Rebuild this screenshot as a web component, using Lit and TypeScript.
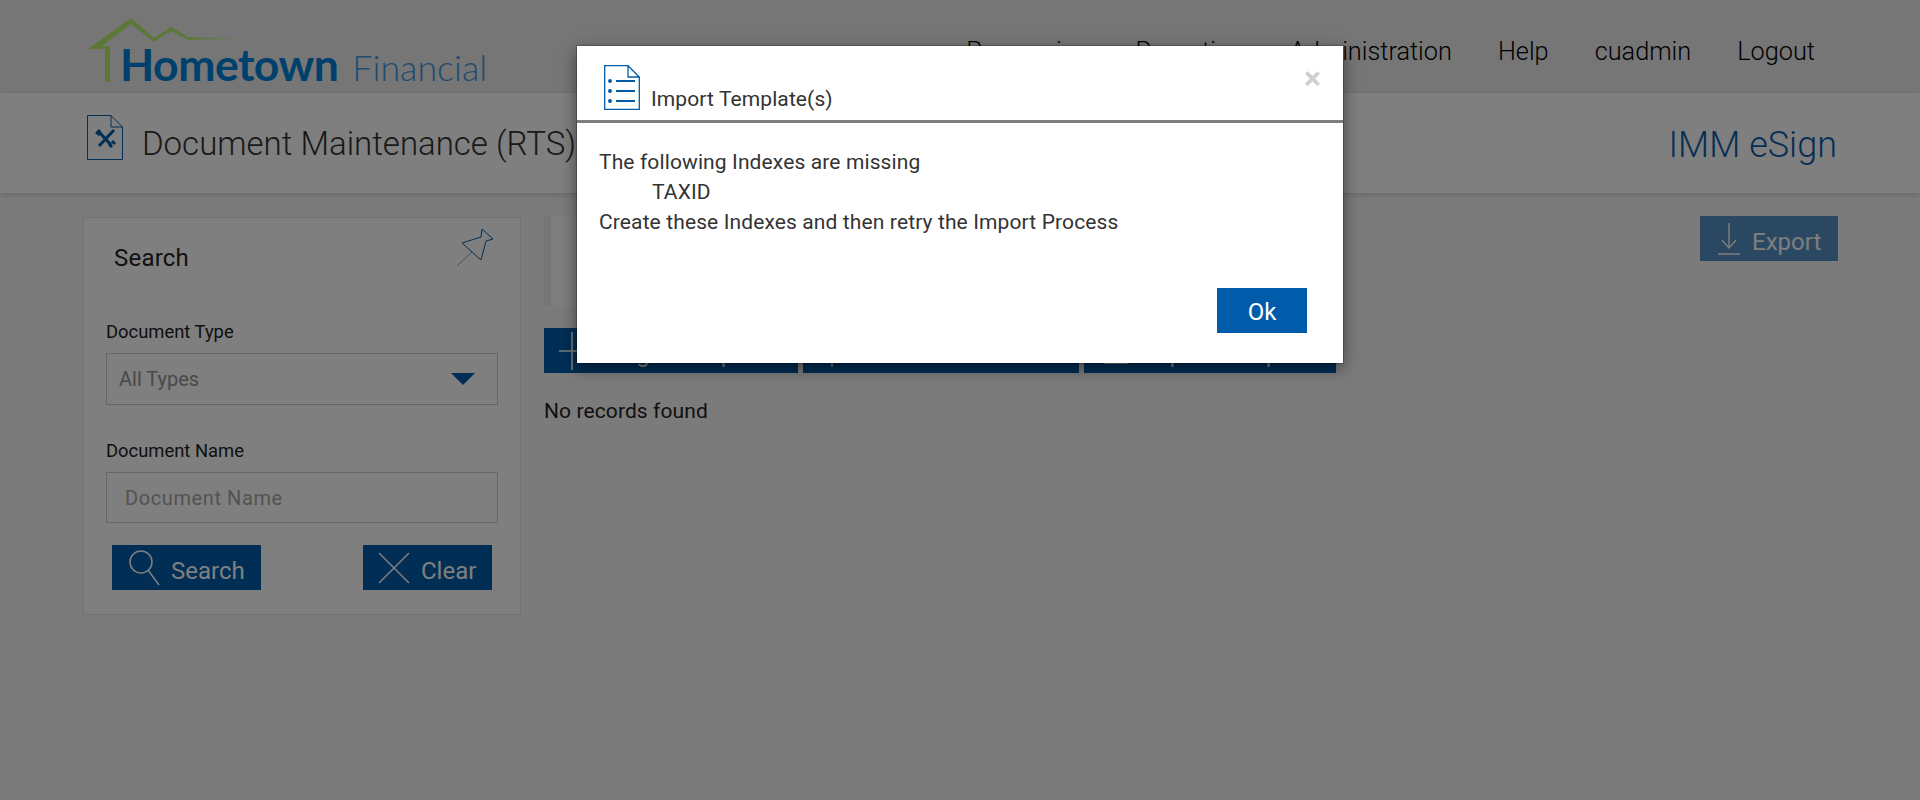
import { LitElement, html, css, svg } from "lit";
import { customElement } from "lit/decorators.js";

const plus = svg`<path d="M8 21H40M21 2V40" fill="none" stroke="#fff" stroke-width="1.6"/>`;

@customElement("app-root")
export class AppRoot extends LitElement {
  static styles = css`
    :host { display: block; height: 800px; position: relative; overflow: hidden; background: #f6f6f6; font-family: Roboto, "Liberation Sans", sans-serif; color: #222; }
    svg { display: block; flex: none; }
    .top { height: 93px; background: #ededed; display: flex; justify-content: space-between; padding: 0 105px 0 86px; box-sizing: border-box; }
    .logo { position: relative; width: 410px; display: flex; align-items: flex-start; }
    .logo svg { position: absolute; left: 0; top: 0; }
    .logo-text { display: flex; align-items: baseline; gap: 14px; margin: 38px 0 0 34px; font-family: Lato, sans-serif; white-space: nowrap; }
    .home { font-size: 44.5px; font-weight: 700; color: #0080d8; letter-spacing: -0.5px; line-height: 52px; }
    .fin { font-size: 35.8px; font-weight: 300; color: #3c98e0; line-height: 52px; }
    nav { display: flex; gap: 46px; font-size: 25.3px; font-weight: 300; color: #000; padding-top: 37px; line-height: 30px; }
    .sub { height: 100px; background: #fff; box-shadow: 0 2px 6px rgba(0,0,0,.15); display: flex; align-items: flex-start; padding: 22px 83px 0 87px; box-sizing: border-box; position: relative; }
    .sub h1 { margin: 9px 0 0 19px; font-size: 33px; font-weight: 300; color: #333; line-height: 40px; flex: 1; }
    .brand { margin-top: 10px; font-size: 36px; font-weight: 300; color: #0a5fa8; line-height: 40px; }
    main { display: flex; align-items: flex-start; gap: 23px; padding: 23px 82px 0 83px; }
    .card { width: 438px; height: 398px; margin-top: 1px; box-sizing: border-box; background: #fff; border: 1px solid #e6e6e6; padding: 0 22px; position: relative; flex: none; }
    .card h2 { margin: 24px 0 0 8px; font-size: 24px; letter-spacing: .2px; font-weight: 400; line-height: 32px; color: #222; }
    .pin { position: absolute; left: 366px; top: 8px; }
    label { display: block; font-size: 18.4px; line-height: 22px; color: #222; }
    .l1 { margin-top: 47px; }
    .l2 { margin-top: 35px; }
    .field { margin-top: 10px; height: 52px; box-sizing: border-box; border: 1px solid #ccc; display: flex; align-items: center; justify-content: space-between; padding: 0 22px 0 12px; font-size: 20px; color: #929292; }
    .caret { width: 0; height: 0; border-left: 12px solid transparent; border-right: 12px solid transparent; border-top: 12px solid #005cab; }
    input { display: block; width: 100%; box-sizing: border-box; height: 51px; margin-top: 10px; border: 1px solid #ccc; background: transparent; padding: 0 18px; font: 20px Roboto, sans-serif; letter-spacing: .6px; outline: none; }
    input::placeholder { color: #a6a6a6; opacity: 1; }
    .acts { display: flex; justify-content: space-between; margin: 22px 6px 0 6px; }
    .btn { height: 45px; background: #005cab; color: #fff; display: flex; align-items: center; font-size: 24px; font-weight: 400; box-sizing: border-box; white-space: nowrap; }
    .btn span { padding-top: 7px; line-height: 30px; }
    .b-search { width: 149px; padding-left: 17px; gap: 9px; }
    .b-clear { width: 129px; padding-left: 15px; gap: 11px; }
    .right { flex: 1; display: flex; flex-direction: column; align-items: flex-start; position: relative; }
    .box { width: 700px; height: 90px; background: #fcfcfc; border-left: 7px solid #ececec; box-sizing: border-box; }
    .row { display: flex; gap: 5px; margin-top: 22px; }
    .row .btn { justify-content: flex-start; box-sizing: border-box; }
    .r1 { width: 254px; padding-left: 7px; gap: 10px; }
    .r2 { width: 276px; padding-left: 15px; gap: 14px; }
    .r3 { width: 252px; padding-left: 20px; gap: 14px; }
    .none { margin: 26px 0 0; font-size: 21px; letter-spacing: .1px; line-height: 24px; color: #222; }
    .export { position: absolute; right: 0; top: 0; width: 138px; opacity: .65; padding-left: 17px; gap: 11px; }
    .overlay { position: absolute; inset: 0; background: rgba(0,0,0,.5); }
    .modal { position: absolute; left: 577px; top: 46px; width: 766px; height: 317px; background: #fff; box-shadow: 0 5px 15px rgba(0,0,0,.5); outline: 1px solid rgba(0,0,0,.2); display: flex; flex-direction: column; }
    .m-head { height: 77px; box-sizing: border-box; border-bottom: 3px solid #7f7f7f; display: flex; align-items: flex-start; padding: 19px 23px 0 27px; position: relative; flex: none; }
    .m-head span { margin: 22px 0 0 11px; font-size: 21px; letter-spacing: .1px; line-height: 24px; color: #333; }
    .close { position: absolute; right: 22px; top: 15px; font-size: 32px; font-weight: 700; line-height: 34px; color: #cfcfcf; }
    .m-body { padding: 24px 0 0 22px; font-size: 21px; letter-spacing: .12px; line-height: 30px; color: #333; flex: 1; }
    .indent { padding-left: 53px; }
    .ok { position: absolute; left: 640px; top: 242px; width: 90px; justify-content: center; }
    .ok span { padding-top: 3px; }
  `;

  render() {
    return html`
      <div class="top">
        <div class="logo">
          <svg width="180" height="90" viewBox="0 0 180 90"><defs><linearGradient id="g" x1="100" x2="165" y1="0" y2="0" gradientUnits="userSpaceOnUse"><stop offset="0" stop-color="#b8f06c"/><stop offset="1" stop-color="#b8f06c" stop-opacity="0"/></linearGradient></defs>
            <path d="M19 82V49H2L45 18 68 38 85 27 102 37V40L85 31 68 42 45 24 16 46H24V82Z" fill="#b8f06c"/>
            <path d="M102 37 164 38.5 102 40Z" fill="url(#g)"/>
          </svg>
          <div class="logo-text"><span class="home">Hometown</span><span class="fin">Financial</span></div>
        </div>
        <nav><span>Processing</span><span>Reporting</span><span>Administration</span><span>Help</span><span>cuadmin</span><span>Logout</span></nav>
      </div>
      <div class="sub">
        <svg width="36" height="45" viewBox="0 0 36 45"><path d="M.5.5H24L35.5 12V44.5H.5ZM24 .5V12H35.5" fill="none" stroke="#0a5fa8" stroke-width="1"/><path d="M11 15 14 19 24 30M9 17 13 20M27 15 12 31M22 29 25 32M25 26 28 29" fill="none" stroke="#005cab" stroke-width="3"/></svg>
        <h1>Document Maintenance (RTS)</h1>
        <div class="brand">IMM eSign</div>
      </div>
      <main>
        <section class="card">
          <h2>Search</h2>
          <svg class="pin" width="50" height="50" viewBox="0 0 50 50"><path d="M32 3 43 13 36 15 31 34 12 17 31 11Z" fill="none" stroke="#005cab" stroke-width="1"/><path d="M22 26 7 40" stroke="#8aa" stroke-width="1"/></svg>
          <label class="l1">Document Type</label>
          <div class="field">All Types<i class="caret"></i></div>
          <label class="l2">Document Name</label>
          <input placeholder="Document Name" />
          <div class="acts">
            <div class="btn b-search"><svg width="33" height="36" viewBox="0 0 33 36"><circle cx="12" cy="12" r="11" fill="none" stroke="#fff" stroke-width="1.5"/><path d="M19 20 30 35" stroke="#fff" stroke-width="1.5"/></svg><span>Search</span></div>
            <div class="btn b-clear"><svg width="32" height="32" viewBox="0 0 32 32"><path d="M1 1 31 31M31 1 1 31" stroke="#fff" stroke-width="1.5"/></svg><span>Clear</span></div>
          </div>
        </section>
        <section class="right">
          <div class="box"></div>
          <div class="row">
            <div class="btn r1"><svg width="42" height="42" viewBox="0 0 42 42">${plus}</svg><span>Single Template</span></div>
            <div class="btn r2"><svg width="30" height="42" viewBox="0 0 30 42"><path d="M14 2V37" stroke="#fff" stroke-width="1.5"/></svg><span>Delete Selected</span></div>
            <div class="btn r3"><svg width="24" height="30" viewBox="0 0 24 30"><path d="M0 27H24" stroke="#fff" stroke-width="2"/></svg><span>Import Template</span></div>
          </div>
          <p class="none">No records found</p>
          <div class="btn export"><svg width="24" height="32" viewBox="0 0 24 32"><path d="M12 0V24M5 17 12 25 19 17M1 31H23" fill="none" stroke="#fff" stroke-width="1.4"/></svg><span>Export</span></div>
        </section>
      </main>
      <div class="overlay"></div>
      <div class="modal" role="dialog">
        <div class="m-head">
          <svg width="36" height="45" viewBox="0 0 36 45"><path d="M.7.7H24L35.3 12V44.3H.7ZM24 .7V12H35.3" fill="none" stroke="#005cab" stroke-width="1.3"/><circle cx="6" cy="16" r="2" fill="#005cab"/><circle cx="6" cy="26" r="2" fill="#005cab"/><circle cx="6" cy="36" r="2" fill="#005cab"/><path d="M12 16H31M12 26H31M12 36H31" stroke="#005cab" stroke-width="2"/></svg>
          <span>Import Template(s)</span>
          <div class="close">×</div>
        </div>
        <div class="m-body">
          <div>The following Indexes are missing</div>
          <div class="indent">TAXID</div>
          <div>Create these Indexes and then retry the Import Process</div>
        </div>
        <div class="btn ok"><span>Ok</span></div>
      </div>
    `;
  }
}
